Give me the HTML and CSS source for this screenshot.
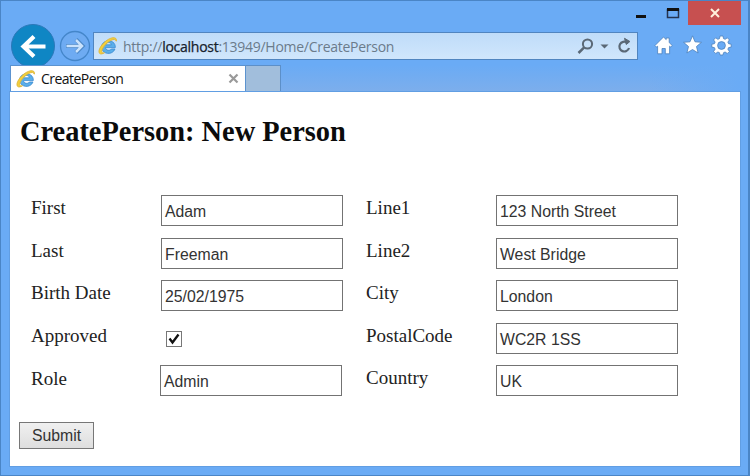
FILE: index.html
```html
<!DOCTYPE html>
<html lang="en">
<head>
<meta charset="utf-8">
<title>CreatePerson</title>
<link rel="stylesheet" href="styles.css">
</head>
<body>
<svg width="0" height="0" class="defs">
  <defs>
    <symbol id="ie" viewBox="0 0 20 20">
      <path d="M17.300 11.600H7.500c.4 3.200 4.600 3.500 5.800 1.400H17C14.500 19.600 4 18.600 3.600 11.200 3.400 3 17.800 2.400 17.300 11.600zM7.500 8.800h5.900c-.2-3-5.500-3.200-5.900 0z" fill="#5aaeea" stroke="#3a8ad0" stroke-width=".8"/>
      <path d="M18.300 5.200C19.300 1.200 15 .7 10.500 3.300 4 7-1 14.700 1.700 17.500c1.200 1 3.200.2 4.800-.8-1.600.4-2.600.2-2.700-1C3.500 12.800 8 7 12.700 4.500c3-1.600 5.200-1.400 5.600.7z" fill="#f2cf3c" stroke="#dfb63a" stroke-width=".9"/>
    </symbol>
  </defs>
</svg>
<div class="window">
  <header class="titlebar">
    <svg class="minmax" width="60" height="22" viewBox="0 0 60 22">
      <path d="M10 17.500h10" stroke="#111" stroke-width="3"/>
      <rect x="41.500" y="10.500" width="11" height="8" fill="none" stroke="#243350" stroke-width="1.500"/>
      <path d="M41 10.500h12" stroke="#111" stroke-width="3"/>
    </svg>
    <div class="close"><svg width="12" height="12" viewBox="0 0 12 12"><path d="M2 2l8 8M10 2l-8 8" stroke="#fff0dc" stroke-width="2"/></svg></div>
  </header>
  <nav class="navbar">
    <svg class="back" width="44" height="44" viewBox="0 0 44 44">
      <circle cx="22" cy="22" r="21.500" fill="#0f86c4" stroke="#2b78b9"/>
      <path d="M34.500 22.500H12.500M23 12.500L12.500 22.500 23 32.500" fill="none" stroke="#fff" stroke-width="4.200"/>
    </svg>
    <svg class="forward" width="32" height="32" viewBox="0 0 32 32">
      <circle cx="16" cy="16" r="14.500" fill="#6eabf2" stroke="#4486ca" stroke-width="1.300"/>
      <path d="M7 16h16M17 9.500l6.500 6.500-6.500 6.500" fill="none" stroke="#4d88c8" stroke-width="4.200"/>
      <path d="M7.500 16h15M17 10l6 6-6 6" fill="none" stroke="#c9e2fc" stroke-width="2.500"/>
    </svg>
    <div class="address">
      <svg class="site" width="20" height="20"><use href="#ie"/></svg>
      <div class="url">http://<span class="host">localhost</span>:13949/Home/CreatePerson</div>
      <svg width="58" height="20" viewBox="0 0 58 20" fill="none" stroke="#5a6876">
        <circle cx="10.500" cy="8" r="4.600" stroke-width="2"/>
        <path d="M7.200 11.400L1.500 17" stroke-width="2.500"/>
        <path d="M23.500 8.500h8l-4 4z" fill="#5a6876" stroke="none"/>
        <path d="M50 6.500A4.900 4.900 0 1 0 52 12" stroke-width="2.200"/>
        <path d="M47.500 2.300l1.800 6.200 3.600-3z" fill="#5a6876" stroke-width="1"/>
      </svg>
    </div>
    <svg class="tools" width="82" height="24" viewBox="0 0 82 24" fill="#fff" stroke="#4b80bb" stroke-width=".8">
      <path d="M2 12.500L10.500 4l2.700 2.600V5h3v4.600l3 2.900-1.600 1.600-1-.9v7.600h-4.300v-5.300H9v5.300H4.600v-7.600l-1 .9z"/>
      <path d="M39.500 2.800l2.500 6 6.500.5-5 4.200 1.600 6.500-5.600-3.500-5.600 3.500 1.600-6.500-5-4.200 6.500-.5z"/>
      <path fill-rule="evenodd" d="M67 3h3l.5 2.600 1.600.7 2.200-1.500 2.100 2.100-1.500 2.200.7 1.600 2.600.5v2.900l-2.600.5-.7 1.600 1.500 2.200-2.100 2.100-2.200-1.500-1.600.7L70 22h-3l-.5-2.300-1.600-.7-2.200 1.500-2.100-2.100 1.500-2.200-.7-1.600-2.600-.5v-2.900l2.600-.5.7-1.600-1.500-2.200 2.100-2.100 2.200 1.500 1.600-.7zM68.500 8.600a3.900 3.900 0 1 0 0 7.800 3.900 3.900 0 0 0 0-7.800z"/>
    </svg>
  </nav>
  <div class="tabs">
    <div class="tab">
      <svg width="20" height="20"><use href="#ie"/></svg>
      <span class="tab-title">CreatePerson</span>
      <svg width="11" height="11" viewBox="0 0 11 11"><path d="M1.500 1.500l8 8M9.500 1.500l-8 8" stroke="#999" stroke-width="2.200"/></svg>
    </div>
    <div class="newtab"></div>
    <div class="tabfill"></div>
  </div>
  <main class="page">
    <h2>CreatePerson: New Person</h2>
    <form class="fields">
      <div class="column">
        <div class="row"><label>First</label><div class="box">Adam</div></div>
        <div class="row"><label>Last</label><div class="box">Freeman</div></div>
        <div class="row"><label>Birth Date</label><div class="box">25/02/1975</div></div>
        <div class="row"><label>Approved</label><div class="check"><svg width="14" height="14" viewBox="0 0 14 14"><path d="M2.500 6.500l3 4L11.500 2.500" fill="none" stroke="#111" stroke-width="2.300"/></svg></div></div>
        <div class="row role"><label>Role</label><div class="box">Admin</div></div>
      </div>
      <div class="column">
        <div class="row"><label>Line1</label><div class="box">123 North Street</div></div>
        <div class="row"><label>Line2</label><div class="box">West Bridge</div></div>
        <div class="row"><label>City</label><div class="box">London</div></div>
        <div class="row"><label>PostalCode</label><div class="box">WC2R 1SS</div></div>
        <div class="row"><label>Country</label><div class="box">UK</div></div>
      </div>
    </form>
    <div class="submit">Submit</div>
  </main>
</div>
</body>
</html>
```
FILE: styles.css
```css
* { box-sizing: border-box; }
body { margin: 0; overflow: hidden; }
svg { display: block; flex: none; }
.defs { position: absolute; }
.window {
  width: 750px;
  height: 476px;
  border: 1px solid #4a85c6;
  border-right-width: 2px;
  background: #6aabf5;
  display: flex;
  flex-direction: column;
}
.titlebar { height: 24px; display: flex; justify-content: flex-end; padding-right: 7px; }
.minmax { margin-right: 2px; margin-top: -2px; }
.close {
  width: 53px;
  height: 24px;
  background: #c75050;
  display: flex;
  align-items: center;
  justify-content: center;
}
.navbar { height: 40px; display: flex; align-items: flex-start; padding-left: 10px; }
.back { margin-top: -1px; }
.forward { margin: 5px 0 0 4px; }
.address {
  width: 545px;
  height: 28px;
  margin: 7px 0 0 2px;
  border: 1px solid #5085c0;
  background: linear-gradient(#bfdcf9, #d0e6fc);
  display: flex;
  align-items: center;
  padding: 0 2px 0 4px;
}
.site { margin-right: 5px; }
.url {
  flex: 1;
  white-space: nowrap;
  font: 14px/20px "Open Sans", sans-serif;
  letter-spacing: -0.27px;
  padding-top: 1px;
  color: #6b7b8b;
}
.host { color: #17212b; -webkit-text-stroke: 0.25px #17212b; }
.tools { margin: 8px 0 0 15px; }
.tabs { height: 27px; display: flex; position: relative; padding-left: 9px; }
.tab {
  width: 236px;
  background: #fff;
  border: 1px solid #5c93cf;
  display: flex;
  align-items: center;
  padding: 0 6px 0 5px;
}
.tab-title {
  flex: 1;
  margin-left: 5px;
  font: 14px "Open Sans", sans-serif;
  letter-spacing: -0.54px;
  color: #111;
}
.newtab { width: 35px; background: #a1bedc; border: 1px solid #5c8fc8; border-left: 0; }
.tabfill {
  width: 459px;
  height: 27px;
  border-bottom: 1px solid #5c93cf;
  background: linear-gradient(90deg, transparent 80%, #6aabf5), linear-gradient(#6aabf5, #7caeec);
}
.page {
  width: 730px;
  height: 374px;
  margin-left: 9px;
  background: #fff;
  box-shadow: 0 0 0 1px #619ee3;
  padding: 23px 0 0 9px;
  position: relative;
}
h2 {
  margin: 0 0 0 1px;
  font: bold 28.400px/34px "Liberation Serif", serif;
  color: #0b0b0b;
  white-space: nowrap;
}
.fields { display: flex; margin: 46px 0 0 12px; }
.column { width: 335px; }
.row { display: flex; height: 42.600px; }
label { width: 130px; padding-top: 1px; font: 19px/24px "Liberation Serif", serif; color: #222; }
.box {
  width: 182px;
  height: 31px;
  border: 1px solid #737373;
  padding: 1px 0 0 3px;
  font: 15.800px/30px "Liberation Sans", sans-serif;
  color: #333;
  white-space: nowrap;
}
.role label { width: 129px; padding-top: 2px; }
.check { width: 16px; height: 16px; border: 1px solid #777; margin: 8px 0 0 5px; }
.submit {
  width: 75px;
  height: 27px;
  margin-top: 14px;
  border: 1px solid #777;
  background: linear-gradient(#f0f0f0, #dedede);
  font: 15.800px/26px "Liberation Sans", sans-serif;
  text-align: center;
  color: #333;
}
```
